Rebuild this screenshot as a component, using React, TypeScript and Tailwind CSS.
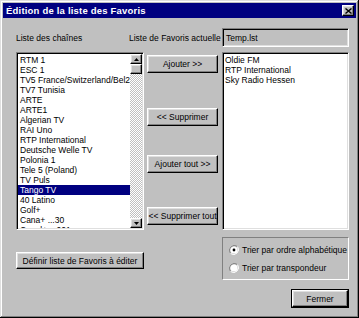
import React from 'react';

const channels = [
  'RTM 1',
  'ESC 1',
  'TV5 France/Switzerland/Bel2',
  'TV7 Tunisia',
  'ARTE',
  'ARTE1',
  'Algerian TV',
  'RAI Uno',
  'RTP International',
  'Deutsche Welle TV',
  'Polonia 1',
  'Tele 5 (Poland)',
  'TV Puls',
  'Tango TV',
  '40 Latino',
  'Golf+',
  'Cana+ ...30',
  'Canal+ ...001',
];

const favorites = ['Oldie FM', 'RTP International', 'Sky Radio Hessen'];

// relief styles, win9x style
const raised =
  'border border-t-white border-l-white border-r-black border-b-black shadow-[inset_-1px_-1px_0_#808080,inset_1px_1px_0_#dfdfdf]';
const sunken =
  'border border-t-[#808080] border-l-[#808080] border-r-white border-b-white shadow-[inset_1px_1px_0_#000,inset_-1px_-1px_0_#dfdfdf]';

const Btn: React.FC<{ label: string; className?: string }> = ({ label, className = '' }) => (
  <div className={`flex items-center justify-center bg-[#c0c0c0] text-black ${raised} ${className}`}>
    <span className="whitespace-nowrap">{label}</span>
  </div>
);

const Arrow: React.FC<{ up?: boolean }> = ({ up }) => (
  <div className={`flex h-[10px] w-full items-center justify-center bg-[#c0c0c0] ${raised}`}>
    <svg width="5" height="3" viewBox="0 0 5 3">
      {up ? <path d="M2.5 0 L5 3 L0 3 Z" fill="#000" /> : <path d="M0 0 L5 0 L2.5 3 Z" fill="#000" />}
    </svg>
  </div>
);

const Radio: React.FC<{ checked?: boolean; label: string }> = ({ checked, label }) => (
  <div className="flex items-center gap-[3px]">
    <svg width="10" height="10" viewBox="0 0 10 10">
      <path d="M8.5 1.5 A5 5 0 0 0 1.5 8.5" fill="none" stroke="#808080" strokeWidth="1" />
      <path d="M1.5 8.5 A5 5 0 0 0 8.5 1.5" fill="none" stroke="#fff" strokeWidth="1" />
      <circle cx="5" cy="5" r="3.6" fill="#fff" />
      {checked && <circle cx="5" cy="5" r="1.4" fill="#000" />}
    </svg>
    <span className="whitespace-nowrap">{label}</span>
  </div>
);

export default function App() {
  return (
    <div className="h-[318px] w-[359px] bg-[#c0c0c0] p-[3px] font-['Liberation_Sans',Arial,sans-serif] text-[8.5px] leading-[10px] text-black shadow-[inset_-1px_-1px_0_#000,inset_1px_1px_0_#dfdfdf,inset_-2px_-2px_0_#808080,inset_2px_2px_0_#fff]">
      <div className="flex h-[15px] items-center justify-between bg-[#000080] pl-[3px] pr-[2px]">
        <span className="text-[9.5px] font-bold tracking-[0.2px] text-white">Édition de la liste des Favoris</span>
        <div className={`flex h-[11px] w-[12px] items-center justify-center bg-[#c0c0c0] ${raised}`}>
          <svg width="7" height="6" viewBox="0 0 7 6">
            <path d="M0.5 0.5 L6.5 5.5 M6.5 0.5 L0.5 5.5" stroke="#000" strokeWidth="1.4" />
          </svg>
        </div>
      </div>

      <div className="flex flex-col pl-[13px] pr-[7px] pt-[10px]">
        {/* top labels */}
        <div className="flex h-[19px] items-center">
          <span className="w-[113px]">Liste des chaînes</span>
          <span>Liste de Favoris actuelle</span>
          <div className={`ml-auto flex h-full w-[127px] items-center bg-[#c0c0c0] pl-[3px] ${sunken}`}>Temp.lst</div>
        </div>

        {/* lists */}
        <div className="mt-[5px] flex h-[178px]">
          <div className={`flex w-[128px] bg-white p-[1px] ${sunken}`}>
            <div className="min-w-0 flex-1 overflow-hidden pt-[1px]">
              {channels.map((c) => (
                <div
                  key={c}
                  className={`h-[10px] whitespace-nowrap pl-[2px] ${c === 'Tango TV' ? 'bg-[#000080] text-white' : ''}`}
                >
                  {c}
                </div>
              ))}
            </div>
            <div className="flex w-[12px] flex-col">
              <Arrow up />
              <div className={`h-[10px] bg-[#c0c0c0] ${raised}`} />
              <div className="flex-1 bg-[repeating-conic-gradient(#c0c0c0_0_25%,#fff_0_50%)] bg-[length:2px_2px]" />
              <Arrow />
            </div>
          </div>

          <div className="ml-[3px] flex w-[71px] flex-col">
            <Btn label="Ajouter >>" className="mt-[3px] h-[18px]" />
            <Btn label="<< Supprimer" className="mt-[35px] h-[18px]" />
            <Btn label="Ajouter tout >>" className="mt-[29px] h-[18px]" />
            <Btn label="<< Supprimer tout" className="mt-[34px] h-[18px]" />
          </div>

          <div className={`ml-auto w-[127px] bg-white pl-[2px] pt-[2px] ${sunken}`}>
            {favorites.map((f) => (
              <div key={f} className="h-[10px] whitespace-nowrap">
                {f}
              </div>
            ))}
          </div>
        </div>

        {/* bottom controls */}
        <div className="mt-[7px] flex items-start">
          <Btn label="Définir liste de Favoris à éditer" className="mt-[15px] h-[17px] w-[128px]" />
          <div className="ml-auto flex h-[43px] w-[127px] flex-col justify-center gap-[8px] border border-t-[#808080] border-l-[#808080] border-r-white border-b-white pl-[6px]">
            <Radio checked label="Trier par ordre alphabétique" />
            <Radio label="Trier par transpondeur" />
          </div>
        </div>

        <div className="mt-[9px] flex justify-end">
          <div className="border border-black">
            <Btn label="Fermer" className="h-[17px] w-[56px]" />
          </div>
        </div>
      </div>
    </div>
  );
}
